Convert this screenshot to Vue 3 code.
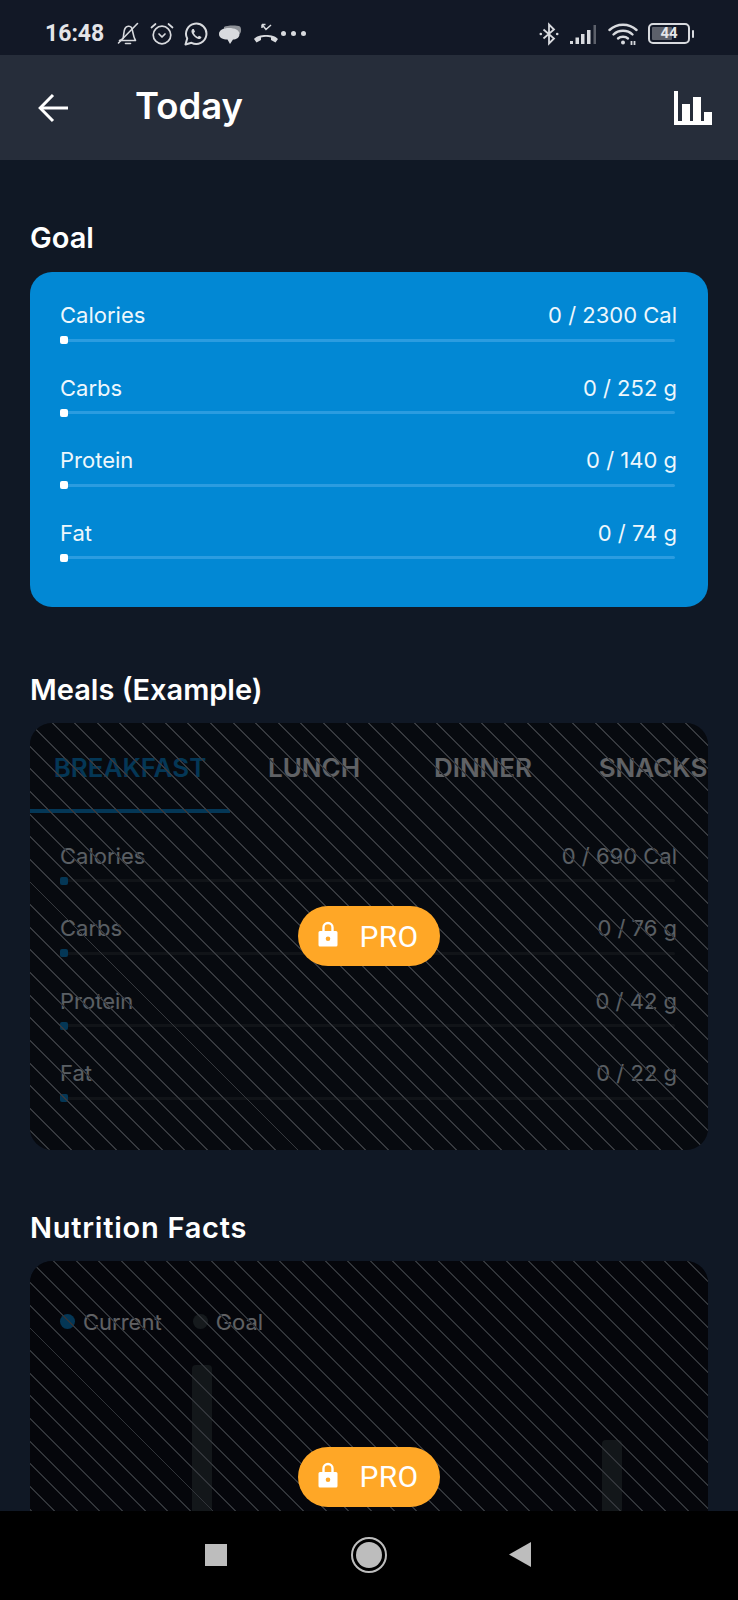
<template>
  <div class="screen">
    <!-- status bar -->
    <div class="status-bar">
      <span class="time">16:48</span>
      <div class="status-left">
        <svg class="st bell" viewBox="0 0 24 24" fill="none" stroke="#d8dade" stroke-width="1.600" stroke-linejoin="round" stroke-linecap="round">
          <path d="M7 16.500 C8 13 7.500 9 9 6.500 C10.500 4 14 3.500 15.500 5.500 C17 8 16.500 13 19.500 18.500 H3.500 C5 18 6 17.500 7 16.500 Z" />
          <path d="M9.500 21.500 H14.500" />
          <path d="M2.500 21 L21.500 1.500" />
        </svg>
        <svg class="st alarm" viewBox="0 0 24 24" fill="none" stroke="#d8dade" stroke-width="1.700" stroke-linecap="round" stroke-linejoin="round">
          <circle cx="12" cy="13" r="8.800" />
          <path d="M1.500 5.500 L5.500 2 M22.500 5.500 L18.500 2" />
          <path d="M9 12 L12 15 L15 12" />
        </svg>
        <svg class="st whatsapp" viewBox="0 0 24 24" fill="none">
          <path d="M1.500 22.500 L3.200 16.500 A10.200 10.200 0 1 1 7.500 20.800 Z" stroke="#d8dade" stroke-width="2" stroke-linejoin="round" />
          <path d="M8.500 7 C7.300 8 7 9.700 8.200 11.800 C9.500 14.200 12 16.400 14.500 17 C16 17.300 17.300 16.300 17.500 15 L15 13.700 L13.800 15 C12.200 14.300 10.600 12.800 9.800 11 L11 9.800 L9.800 7 Z" fill="#d8dade" />
        </svg>
        <svg class="st chat" viewBox="0 0 24 24">
          <path d="M6 5 C9 3 19 3 22 4.500 C24 7 23 12 21 12 L6 12 Z" fill="#8e9197" />
          <path d="M1 12 C1 8 5.500 6 11 6 C16.500 6 21.500 8 21.500 12 C21.500 16 18 17.500 15 17.500 L12 22 L9.500 17.500 C5 17.500 1 16 1 12 Z" fill="#d8dade" />
        </svg>
        <svg class="st phone" viewBox="0 0 26 24" fill="none">
          <path d="M1 17 C5 11.500 21 11.500 25 17 L22.500 20.500 L18 18 L18 15.500 C15 14.500 11 14.500 8 15.500 L8 18 L3.500 20.500 Z" fill="#d8dade" />
          <path d="M9 2.500 L13 7.500 L18 3 M9 2.500 V6 M9 2.500 H12.500" stroke="#d8dade" stroke-width="1.500" />
        </svg>
        <span class="dots"><i></i><i></i><i></i></span>
      </div>
      <div class="status-right">
        <svg class="st bt" viewBox="0 0 20 24" fill="none" stroke="#d8dade" stroke-width="1.800">
          <path d="M4.500 7.500 L15 16.500 L10 21.500 V2.500 L15 7.500 L4.500 16.500" />
          <circle cx="1.800" cy="12" r="1.300" fill="#d8dade" stroke="none" />
          <circle cx="18.200" cy="12" r="1.300" fill="#d8dade" stroke="none" />
        </svg>
        <svg class="signal" viewBox="0 0 28 20">
          <path d="M1 17 H4 V20 H1 Z M6.500 13.500 H10 V20 H6.500 Z M12 10 H15.500 V20 H12 Z M18 6 H21.500 V20 H18 Z" fill="#d8dade" />
          <path d="M24.500 1 H27 V20 H24.500 Z" fill="#5c606a" />
        </svg>
        <svg class="wifi" viewBox="0 0 30 24" fill="none" stroke="#d8dade" stroke-width="2.400" stroke-linecap="round">
          <path d="M1.500 8 C9 1 21 1 28.500 8" />
          <path d="M5.500 12.500 C10.500 7.500 19.500 7.500 24.500 12.500" />
          <path d="M10 16.500 C12.500 14.200 17.500 14.200 20 16.500" />
          <circle cx="15" cy="20.500" r="2" fill="#d8dade" stroke="none" />
          <path d="M23.500 19 V23 M26.500 19 V23" stroke-width="1.800" stroke-linecap="butt" />
        </svg>
        <div class="battery">
          <div class="battery-body">
            <div class="battery-level"></div>
            <span class="battery-text">44</span>
          </div>
          <div class="battery-tip"></div>
        </div>
      </div>
    </div>

    <!-- app bar -->
    <header class="app-bar">
      <svg class="back" viewBox="0 0 30 30" fill="none" stroke="#fff" stroke-width="3">
        <path d="M30 15 H3" />
        <path d="M15 2 L2.200 15 L15 28" />
      </svg>
      <h1 class="app-title">Today</h1>
      <svg class="chart-icon" viewBox="0 0 38 34" fill="#fff">
        <path d="M0 0 H4 V30 H8 V13 H16 V30 H19 V6 H27 V30 H30 V21 H38 V34 H0 Z" />
      </svg>
    </header>

    <main class="content">
      <h2 class="section-title tight">Goal</h2>
      <section class="card goal-card">
        <div v-for="row in goalRows" :key="row.name" class="macro-row">
          <div class="macro-text">
            <span>{{ row.name }}</span>
            <span>{{ row.value }}</span>
          </div>
          <div class="track"><div class="knob"></div></div>
        </div>
      </section>

      <h2 class="section-title">Meals (Example)</h2>
      <section class="card locked meals-card">
        <div class="tabs">
          <div v-for="(tab, i) in tabs" :key="tab" class="tab" :class="{ active: i === 0 }">{{ tab }}</div>
        </div>
        <div class="meal-rows">
          <div v-for="row in mealRows" :key="row.name" class="macro-row">
            <div class="macro-text">
              <span>{{ row.name }}</span>
              <span>{{ row.value }}</span>
            </div>
            <div class="track dark"><div class="knob blue"></div></div>
          </div>
        </div>
        <div class="lock-layer">
          <div class="pro-badge">
            <svg class="lock" viewBox="0 0 20 26">
              <path d="M5.500 11 V6.500 A4.500 4.500 0 0 1 14.500 6.500 V11" fill="none" stroke="#fff" stroke-width="2.400" />
              <path fill-rule="evenodd" d="M2 10 H18 A1.500 1.500 0 0 1 19.500 11.500 V24 A1.500 1.500 0 0 1 18 25.500 H2 A1.500 1.500 0 0 1 0.500 24 V11.500 A1.500 1.500 0 0 1 2 10 Z M10 15.500 A2.300 2.300 0 1 0 10 20.100 A2.300 2.300 0 1 0 10 15.500 Z" fill="#fff" />
            </svg>
            <span>PRO</span>
          </div>
        </div>
      </section>

      <h2 class="section-title tight wide">Nutrition Facts</h2>
      <section class="card locked facts-card">
        <div class="legend">
          <span class="dot current"></span><span class="legend-label">Current</span>
          <span class="dot goal"></span><span class="legend-label">Goal</span>
        </div>
        <div class="bars">
          <div v-for="(h, i) in goalBars" :key="i" class="bar" :style="{ height: h + 'px' }"></div>
        </div>
        <div class="lock-layer">
          <div class="pro-badge">
            <svg class="lock" viewBox="0 0 20 26">
              <path d="M5.500 11 V6.500 A4.500 4.500 0 0 1 14.500 6.500 V11" fill="none" stroke="#fff" stroke-width="2.400" />
              <path fill-rule="evenodd" d="M2 10 H18 A1.500 1.500 0 0 1 19.500 11.500 V24 A1.500 1.500 0 0 1 18 25.500 H2 A1.500 1.500 0 0 1 0.500 24 V11.500 A1.500 1.500 0 0 1 2 10 Z M10 15.500 A2.300 2.300 0 1 0 10 20.100 A2.300 2.300 0 1 0 10 15.500 Z" fill="#fff" />
            </svg>
            <span>PRO</span>
          </div>
        </div>
      </section>
    </main>

    <!-- android nav -->
    <nav class="nav-bar">
      <div class="nav-square"></div>
      <div class="nav-circle"><div></div></div>
      <svg class="nav-back" viewBox="0 0 22 25"><path d="M22 0 V25 L0 12.500 Z" fill="#bdbdbd" /></svg>
    </nav>
  </div>
</template>

<script setup>
const goalRows = [
  { name: 'Calories', value: '0 / 2300 Cal' },
  { name: 'Carbs', value: '0 / 252 g' },
  { name: 'Protein', value: '0 / 140 g' },
  { name: 'Fat', value: '0 / 74 g' }
]

const mealRows = [
  { name: 'Calories', value: '0 / 690 Cal' },
  { name: 'Carbs', value: '0 / 76 g' },
  { name: 'Protein', value: '0 / 42 g' },
  { name: 'Fat', value: '0 / 22 g' }
]

const tabs = ['BREAKFAST', 'LUNCH', 'DINNER', 'SNACKS']

// goal bars of the chart, only the two tall ones show above the nav bar
const goalBars = [294, 100, 219]
</script>

<style scoped>
.screen {
  width: 738px;
  height: 1600px;
  display: flex;
  flex-direction: column;
  background: #101825;
  color: #fff;
  font-family: Inter, "Noto Sans", sans-serif;
  overflow: hidden;
}

.status-bar {
  height: 55px;
  flex: none;
  display: flex;
  align-items: center;
  padding: 12px 44px 0 45px;
  box-sizing: border-box;
  background: #121826;
}

.time {
  font-family: Roboto, sans-serif;
  font-size: 23px;
  font-weight: 700;
  color: #e4e5e8;
  width: 71px;
}

.status-left {
  display: flex;
  align-items: center;
  gap: 10px;
}

.st {
  width: 24px;
  height: 24px;
  flex: none;
}

.phone {
  width: 26px;
  margin-left: 1px;
}

.dots {
  display: flex;
  gap: 5px;
  margin-left: -8px;
}

.dots i {
  width: 5px;
  height: 5px;
  border-radius: 50%;
  background: #d8dade;
}

.status-right {
  margin-left: auto;
  display: flex;
  align-items: center;
}

.bt {
  width: 20px;
}

.signal {
  width: 28px;
  height: 20px;
  margin-left: 10px;
}

.wifi {
  width: 30px;
  height: 24px;
  margin-left: 11px;
}

.battery {
  display: flex;
  align-items: center;
  margin-left: 10px;
}

.battery-body {
  position: relative;
  width: 42px;
  height: 21px;
  box-sizing: border-box;
  border: 2px solid #d8dade;
  border-radius: 5px;
  padding: 2px;
}

.battery-level {
  width: 60%;
  height: 100%;
  background: #5c606a;
  border-radius: 1px;
}

.battery-text {
  position: absolute;
  inset: 0;
  text-align: center;
  font-family: Roboto, sans-serif;
  font-size: 15px;
  line-height: 17px;
  font-weight: 700;
  color: #e4e5e8;
}

.battery-tip {
  width: 2px;
  height: 8px;
  margin-left: 2px;
  background: #d8dade;
  border-radius: 1px;
}

.app-bar {
  height: 105px;
  flex: none;
  display: flex;
  align-items: center;
  padding: 0 26px 0 38px;
  background: #262d3a;
}

.back {
  width: 30px;
  height: 30px;
}

.app-title {
  margin: 0 0 3px 67px;
  font-size: 36.500px;
  font-weight: 600;
}

.chart-icon {
  margin-left: auto;
  width: 38px;
  height: 34px;
}

.content {
  flex: 1;
  min-height: 0;
  overflow: hidden;
  padding: 0 30px;
}

.section-title {
  margin: 0;
  font-size: 29px;
  font-weight: 600;
  line-height: 36px;
  padding-top: 65px;
  padding-bottom: 15px;
}

.section-title.tight {
  padding-top: 60px;
}

.section-title.wide {
  letter-spacing: 0.75px;
}

.goal-card {
  margin-top: 1px;
  background: #0288d4;
  padding: 29px 30px 45px;
}

.card {
  position: relative;
  border-radius: 22px;
  overflow: hidden;
}

.macro-row {
  height: 43px;
  margin-bottom: 29.500px;
}

.macro-row:last-child {
  margin-bottom: 0;
}

.macro-text {
  display: flex;
  justify-content: space-between;
  font-size: 22px;
  line-height: 28px;
  color: #eef7fc;
  padding-right: 1px;
}

.track {
  position: relative;
  margin: 9.500px 3px 0 0;
  height: 3px;
  background: #2b9ce0;
  border-radius: 2px;
}

.knob {
  position: absolute;
  left: 0;
  top: -2.500px;
  width: 8px;
  height: 8px;
  background: #fff;
  border-radius: 2px;
}

.track.dark {
  background: #25272b;
}

.knob.blue {
  background: #0288d4;
}

.locked {
  background: #0b0d13;
}

.meals-card {
  height: 427px;
}

.facts-card {
  height: 432px;
  background: #03050a;
}

.tabs {
  display: grid;
  grid-template-columns: 200px 168px 170px 170px;
  height: 90px;
}

.tab {
  display: flex;
  align-items: center;
  justify-content: center;
  padding-top: 3px;
  box-sizing: border-box;
  font-size: 26px;
  font-weight: 600;
  border-bottom: 4px solid transparent;
  white-space: nowrap;
}

.tab.active {
  color: #0288d4;
  border-bottom-color: #0288d4;
}

.meal-rows {
  padding: 29px 30px 0;
}

.legend {
  display: flex;
  align-items: center;
  padding: 47px 30px 0;
  font-size: 22px;
  line-height: 28px;
}

.dot {
  width: 15px;
  height: 15px;
  border-radius: 50%;
}

.dot.current {
  background: #0288d4;
}

.dot.goal {
  background: #323c3c;
  margin-left: 31px;
}

.legend-label {
  margin-left: 8px;
}

.bars {
  position: absolute;
  left: 162px;
  right: 86px;
  top: 104px;
  height: 294px;
  display: flex;
  justify-content: space-between;
  align-items: flex-end;
}

.bar {
  width: 20px;
  background: #2a3232;
  border-radius: 4px 4px 0 0;
}

.lock-layer {
  position: absolute;
  inset: 0;
  display: flex;
  align-items: center;
  justify-content: center;
  background:
    repeating-linear-gradient(45deg, transparent 0 12.800px, #36393e 12.800px 14.200px, transparent 14.200px 16px),
    rgba(7, 9, 14, 0.64);
}

.facts-card .lock-layer {
  background:
    repeating-linear-gradient(45deg, transparent 0 1.400px, #313439 1.400px 2.800px, transparent 2.800px 16px),
    rgba(6, 8, 13, 0.64);
}

.pro-badge {
  width: 142px;
  height: 60px;
  display: flex;
  align-items: center;
  justify-content: center;
  gap: 22px;
  background: #ffa726;
  border-radius: 30px;
  font-family: Roboto, sans-serif;
  font-size: 30px;
  letter-spacing: 0.3px;
}

.lock {
  width: 20px;
  height: 26px;
  margin-bottom: 4px;
  margin-left: -2px;
}

.nav-bar {
  height: 89px;
  flex: none;
  display: flex;
  align-items: center;
  background: #000;
  padding-left: 205px;
  padding-bottom: 2px;
  box-sizing: border-box;
}

.nav-square {
  width: 22px;
  height: 22px;
  background: #bdbdbd;
}

.nav-circle {
  width: 32px;
  height: 32px;
  margin-left: 124px;
  border: 2px solid #bdbdbd;
  border-radius: 50%;
  display: flex;
  align-items: center;
  justify-content: center;
}

.nav-circle div {
  width: 26px;
  height: 26px;
  border-radius: 50%;
  background: #bdbdbd;
}

.nav-back {
  width: 22px;
  height: 25px;
  margin-left: 122px;
}
</style>
